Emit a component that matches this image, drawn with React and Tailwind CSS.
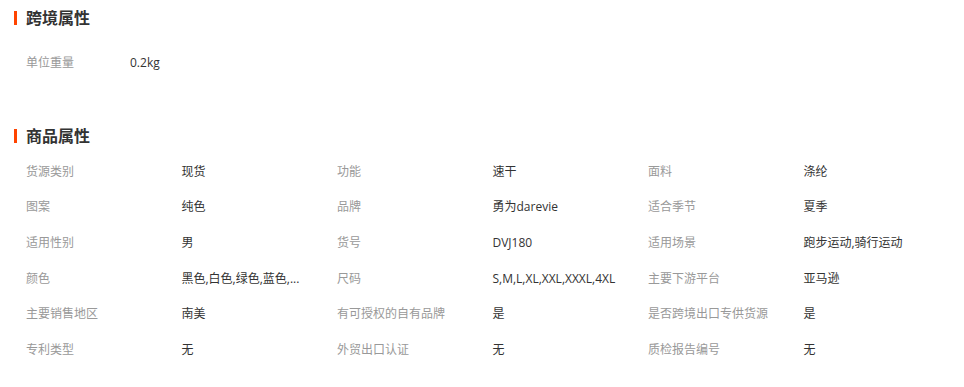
const attrs = [
  ["货源类别", "现货", "功能", "速干", "面料", "涤纶"],
  ["图案", "纯色", "品牌", "勇为darevie", "适合季节", "夏季"],
  ["适用性别", "男", "货号", "DVJ180", "适用场景", "跑步运动,骑行运动"],
  ["颜色", "黑色,白色,绿色,蓝色,...", "尺码", "S,M,L,XL,XXL,XXXL,4XL", "主要下游平台", "亚马逊"],
  ["主要销售地区", "南美", "有可授权的自有品牌", "是", "是否跨境出口专供货源", "是"],
  ["专利类型", "无", "外贸出口认证", "无", "质检报告编号", "无"],
];

function Title({ children }) {
  return (
    <div className="flex items-center h-[20px] pl-[14px]">
      <span className="w-[3px] h-[14px] bg-[#ff4400] mr-[9px]" />
      <h2 className="text-[16px] font-bold text-[#333] leading-[20px]">{children}</h2>
    </div>
  );
}

export default function App() {
  return (
    <div
      className="w-[964px] h-[387px] bg-white text-[12px] overflow-hidden"
      style={{ fontFamily: '"Open Sans", "Noto Sans CJK SC", sans-serif' }}
    >
      <div className="pt-[8px]">
        <Title>跨境属性</Title>
        <div className="flex h-[36px] items-center pl-[26px] mt-[17px]">
          <span className="w-[104px] text-[#999]">单位重量</span>
          <span className="text-[#333]">0.2kg</span>
        </div>
      </div>

      <div className="mt-[45px]">
        <Title>商品属性</Title>
        <div className="mt-[8px] pl-[26px] pr-[5px]">
          {attrs.map((row, i) => (
            <div key={i} className="grid grid-cols-6 h-[35.6px] items-center">
              {row.map((cell, j) => (
                <span
                  key={j}
                  className={
                    j % 2 === 0
                      ? "text-[#999] whitespace-nowrap"
                      : "text-[#333] whitespace-nowrap"
                  }
                >
                  {cell}
                </span>
              ))}
            </div>
          ))}
        </div>
      </div>
    </div>
  );
}
